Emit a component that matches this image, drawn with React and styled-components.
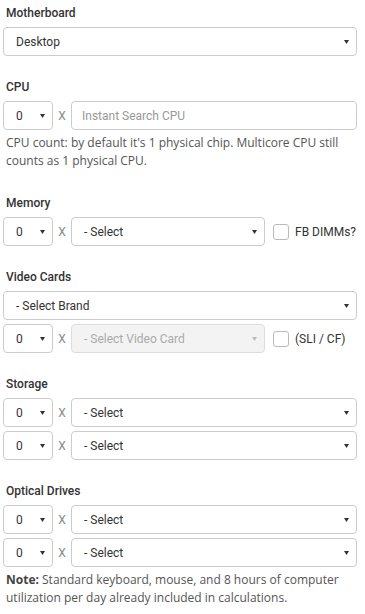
import React from 'react';
import styled, { createGlobalStyle } from 'styled-components';

const GlobalStyle = createGlobalStyle`
  body {
    margin: 0;
    background: #fff;
    font-family: Roboto, "Liberation Sans", Arial, sans-serif;
    color: #333;
  }
`;

const Form = styled.div`
  width: 354px;
  padding: 4px 0 0 3px;
`;

const Section = styled.div`
  margin-bottom: ${(p) => p.gap ?? 22}px;
`;

const Label = styled.div`
  height: 18px;
  line-height: 18px;
  padding-left: 3px;
  margin-bottom: 5px;
  font-size: 12px;
  font-weight: 500;
  color: #333;
`;

const Stack = styled.div`
  display: flex;
  flex-direction: column;
  gap: 4px;
`;

const Row = styled.div`
  display: flex;
  align-items: center;
  height: 29px;
`;

const SelectBox = styled.div`
  box-sizing: border-box;
  display: flex;
  align-items: center;
  justify-content: space-between;
  height: 29px;
  padding: 0 7px 0 12px;
  border: 1px solid ${(p) => (p.disabled ? '#ddd' : '#ccc')};
  border-radius: 4px;
  background: ${(p) => (p.disabled ? '#f3f3f3' : '#fff')};
  color: ${(p) => (p.disabled ? '#aaa' : '#333')};
  font-size: 12px;
  line-height: 16px;
  width: ${(p) => (p.width ? `${p.width}px` : 'auto')};
  flex: ${(p) => (p.width ? '0 0 auto' : '1 1 auto')};
`;

const Caret = styled.svg`
  width: 5px;
  height: 4px;
  fill: ${(p) => (p.disabled ? '#bbb' : '#333')};
`;

const Times = styled.span`
  width: 18px;
  text-align: center;
  font-size: 12px;
  line-height: 16px;
  color: #888;
`;

const TextInput = styled.input`
  box-sizing: border-box;
  flex: 1;
  height: 29px;
  padding: 0 10px;
  border: 1px solid #ccc;
  border-radius: 4px;
  font-family: Roboto, "Liberation Sans", Arial, sans-serif;
  font-size: 12px;
  color: #333;
  outline: none;
  &::placeholder {
    color: #999;
  }
`;

const CheckGroup = styled.label`
  display: flex;
  align-items: center;
  width: 92px;
  box-sizing: border-box;
  padding-left: 8px;
  font-size: 12px;
  line-height: 16px;
  color: #333;
`;

const CheckBox = styled.span`
  box-sizing: border-box;
  width: 16px;
  height: 16px;
  border: 1px solid #bbb;
  border-radius: 3px;
  margin-right: 6px;
  background: #fff;
`;

const Help = styled.p`
  margin: 4px 0 0;
  padding-left: 3px;
  font-family: "Open Sans", "Liberation Sans", sans-serif;
  font-size: 12px;
  line-height: 18px;
  color: #555;
  strong {
    font-weight: 700;
    color: #444;
  }
`;

const Select = ({ value, width, disabled }) => (
  <SelectBox width={width} disabled={disabled}>
    <span>{value}</span>
    <Caret viewBox="0 0 5 4" disabled={disabled}>
      <path d="M0 0h5L2.5 4z" />
    </Caret>
  </SelectBox>
);

const QtyRow = ({ value = '- Select', disabled, check }) => (
  <Row>
    <Select value="0" width={50} />
    <Times>X</Times>
    <Select value={value} disabled={disabled} />
    {check && (
      <CheckGroup>
        <CheckBox />
        {check}
      </CheckGroup>
    )}
  </Row>
);

const App = () => {
  return (
    <Form>
      <GlobalStyle />
      <Section>
        <Label>Motherboard</Label>
        <Row>
          <Select value="Desktop" />
        </Row>
      </Section>

      <Section gap={24}>
        <Label>CPU</Label>
        <Row>
          <Select value="0" width={50} />
          <Times>X</Times>
          <TextInput placeholder="Instant Search CPU" />
        </Row>
        <Help>
          CPU count: by default it's 1 physical chip. Multicore CPU still
          counts as 1 physical CPU.
        </Help>
      </Section>

      <Section>
        <Label>Memory</Label>
        <QtyRow check="FB DIMMs?" />
      </Section>

      <Section>
        <Label>Video Cards</Label>
        <Stack>
          <Row>
            <Select value="- Select Brand" />
          </Row>
          <QtyRow value="- Select Video Card" disabled check="(SLI / CF)" />
        </Stack>
      </Section>

      <Section>
        <Label>Storage</Label>
        <Stack>
          <QtyRow />
          <QtyRow />
        </Stack>
      </Section>

      <Section gap={0}>
        <Label>Optical Drives</Label>
        <Stack>
          <QtyRow />
          <QtyRow />
        </Stack>
        <Help>
          <strong>Note:</strong> Standard keyboard, mouse, and 8 hours of
          computer utilization per day already included in calculations.
        </Help>
      </Section>
    </Form>
  );
};

export default App;
